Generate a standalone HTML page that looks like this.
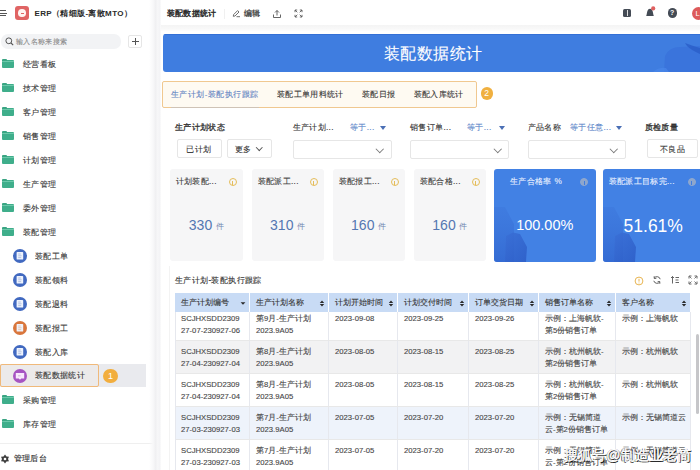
<!DOCTYPE html>
<html><head><meta charset="utf-8">
<style>
*{box-sizing:border-box;margin:0;padding:0}
html,body{width:700px;height:470px;overflow:hidden;background:#fff;font-family:"Liberation Sans",sans-serif;color:#333;font-size:8px;-webkit-text-stroke:0.1px currentColor;letter-spacing:0.35px}
.a{position:absolute}
.t{white-space:nowrap;line-height:1}
/* sidebar */
#sb{left:0;top:0;width:154.5px;height:470px;background:#fff}
#strip{left:149px;top:0;width:12px;height:470px;background:linear-gradient(to right,rgba(255,255,255,0) 0%,#f8f8f9 35%,#f0f0f2 55%,#f7f7f8 72%,#f3f3f5 92%,#fff 100%)}
.mi{position:absolute;left:0;width:146px;height:24px}
.mi .tx{position:absolute;left:23px;top:9px;font-size:8.25px;color:#383838;-webkit-text-stroke:0.12px currentColor;line-height:1;white-space:nowrap}
.fold{position:absolute;left:2.3px;top:8.2px;width:11.4px;height:7.5px;background:#3fae8b;border-radius:0 1px 1px 1px}
.fold:before{content:"";position:absolute;left:0;top:-1.2px;width:4.5px;height:1.6px;background:#3aa583;border-radius:1px 1px 0 0}
.fold:after{content:"";position:absolute;left:0;top:1.2px;width:11.4px;height:0.8px;background:#6cc8aa}
.sub .tx{left:35px}
.ci2{position:absolute;left:13px;top:5px}
.ci{position:absolute;left:13px;top:5px;width:14px;height:14px;border-radius:50%;background:#4770c9}
.ci:after{content:"";position:absolute;left:4.5px;top:3.5px;width:5px;height:7px;background:#e8effc;border-radius:0.5px}
/* main */
#hdr{left:160.5px;top:0;width:540px;height:27px;background:#fff;border-bottom:1px solid #f5f5f5}
.card{position:absolute;top:169px;height:92px;background:#f6f6f7;border-radius:3px}
.card .ct{position:absolute;left:6px;top:9px;font-size:8.25px;color:#3a3a3a;line-height:1;white-space:nowrap}
.card .info{position:absolute;top:9px;width:8px;height:8px;border:1px solid #e5bd5a;border-radius:50%;-webkit-text-stroke:0}
.card .info:after{content:"";position:absolute;left:2.5px;top:1.5px;width:1px;height:3.2px;background:#e5bd5a;border-top:0.6px solid #e5bd5a}
.card .num{position:absolute;left:0;right:0;top:49px;text-align:center;font-size:14px;color:#5477b2;letter-spacing:0;-webkit-text-stroke:0;line-height:1;white-space:nowrap}
.card .num small{font-size:8px;margin-left:3.5px;color:#6f86b0;position:relative;top:-1px}
.bcard{background:#4281e4}
.bcard .ct{color:#eaf1ff}
.bcard .num{color:#fff;font-size:14.5px;top:49px}
.bcard .info{border-color:#8fa8d0;background:#8ea6cc}
.bcard .info:after{background:#3f7de0;border-color:#3f7de0}
.flab{position:absolute;top:123.5px;font-size:8.25px;color:#333;line-height:1;white-space:nowrap}
.feq{position:absolute;top:123.5px;font-size:8.25px;color:#5b86c9;line-height:1;white-space:nowrap}
.tri{position:absolute;top:126px;width:0;height:0;border-left:3.5px solid transparent;border-right:3.5px solid transparent;border-top:4px solid #4a6fb5}
.sel{position:absolute;top:139.5px;height:19px;width:99px;border:1px solid #e6e6e6;border-radius:2px;background:#fff}
.sel:after{content:"";position:absolute;right:8px;top:5px;width:4.5px;height:4.5px;border-right:1px solid #777;border-bottom:1px solid #777;transform:rotate(45deg)}
.btn{position:absolute;top:139px;height:18.5px;border:1px solid #e6e6e6;border-radius:2px;background:#fff;font-size:8.25px;color:#333;line-height:19px;text-align:center;white-space:nowrap}
/* table */
#tbl{position:absolute;left:175px;top:293px;width:516px;height:180px}
#tbl:before{content:"";position:absolute;left:0;top:19px;width:1px;height:170px;background:#e6e8ee;z-index:2}
.th{position:absolute;top:0;height:19px;background:#c8dbf5;border-right:1px solid #fff}
.th span{position:absolute;left:6px;top:6px;font-size:8px;letter-spacing:0;color:#333;line-height:1;white-space:nowrap}
.th svg{position:absolute;right:3.5px;top:6.5px}

.row{position:absolute;left:0;width:516px;border-bottom:1px solid #e8e8e8}
.cell{position:absolute;top:0;bottom:0;border-right:1px solid #e6e8ee}
.cell p{position:absolute;left:6px;font-size:7.7px;letter-spacing:0;-webkit-text-stroke:0.12px currentColor;color:#474747;line-height:12px;white-space:nowrap}
</style></head><body>

<!-- SIDEBAR -->
<div id="sb" class="a">
  <!-- hamburger -->
  <div class="a" style="left:0;top:10px;width:6px;height:1px;background:#555"></div>
  <div class="a" style="left:0;top:12.5px;width:7px;height:1px;background:#555"></div>
  <div class="a" style="left:0;top:15px;width:6px;height:1px;background:#555"></div>
  <!-- logo -->
  <div class="a" style="left:15px;top:6px;width:14px;height:14px;background:#e06464;border-radius:3px">
    <div class="a" style="left:3.2px;top:3.2px;width:7.6px;height:7.6px;border-radius:50%;background:#fff4f2"></div>
    <div class="a" style="left:5.5px;top:6.5px;width:3px;height:1px;background:#e06464"></div>
  </div>
  <div class="a t" style="left:34.5px;top:9.5px;font-size:8px;font-weight:bold;color:#2a2a2a;-webkit-text-stroke:0">ERP（精细版-离散MTO）</div>
  <!-- search -->
  <div class="a" style="left:1px;top:33.5px;width:120px;height:15px;background:#f2f3f5;border-radius:7px"></div>
  <svg class="a" style="left:5px;top:37px" width="9" height="9" viewBox="0 0 9 9"><circle cx="3.8" cy="3.8" r="2.9" fill="none" stroke="#555" stroke-width="1"/><path d="M6 6 L8.2 8.2" stroke="#555" stroke-width="1.1"/></svg>
  <div class="a t" style="left:16px;top:37.5px;font-size:7.2px;color:#888">输入名称来搜索</div>
  <div class="a" style="left:128px;top:35px;width:14px;height:13px;border:1px solid #e6e6e6;border-radius:2px;background:#fff"></div>
  <div class="a" style="left:131.5px;top:41px;width:7px;height:1px;background:#555"></div>
  <div class="a" style="left:134.5px;top:38px;width:1px;height:7px;background:#555"></div>

  <div class="mi" style="top:52px"><div class="fold"></div><div class="tx">经营看板</div></div>
  <div class="mi" style="top:76px"><div class="fold"></div><div class="tx">技术管理</div></div>
  <div class="mi" style="top:100px"><div class="fold"></div><div class="tx">客户管理</div></div>
  <div class="mi" style="top:124px"><div class="fold"></div><div class="tx">销售管理</div></div>
  <div class="mi" style="top:148px"><div class="fold"></div><div class="tx">计划管理</div></div>
  <div class="mi" style="top:172px"><div class="fold"></div><div class="tx">生产管理</div></div>
  <div class="mi" style="top:196px"><div class="fold"></div><div class="tx">委外管理</div></div>
  <div class="mi" style="top:220px"><div class="fold"></div><div class="tx">装配管理</div></div>
  <div class="mi sub" style="top:244px"><svg class="ci2" width="14" height="14" viewBox="0 0 14 14"><circle cx="7" cy="7" r="7" fill="#4169c0"/><rect x="3.6" y="3" width="6.6" height="7.6" rx="0.7" fill="#eef3fd"/><path d="M5.2 5 H7.8 M5.2 6.8 H8.6 M5.2 8.6 H8.2" stroke="#9db0d8" stroke-width="0.7"/></svg><div class="tx">装配工单</div></div>
  <div class="mi sub" style="top:268px"><svg class="ci2" width="14" height="14" viewBox="0 0 14 14"><circle cx="7" cy="7" r="7" fill="#4169c0"/><rect x="3.6" y="3" width="6.6" height="7.6" rx="0.7" fill="#eef3fd"/><path d="M5.2 5 H7.8 M5.2 6.8 H8.6 M5.2 8.6 H8.2" stroke="#9db0d8" stroke-width="0.7"/></svg><div class="tx">装配领料</div></div>
  <div class="mi sub" style="top:292px"><svg class="ci2" width="14" height="14" viewBox="0 0 14 14"><circle cx="7" cy="7" r="7" fill="#4169c0"/><rect x="3.6" y="3" width="6.6" height="7.6" rx="0.7" fill="#eef3fd"/><path d="M5.2 5 H7.8 M5.2 6.8 H8.6 M5.2 8.6 H8.2" stroke="#9db0d8" stroke-width="0.7"/></svg><div class="tx">装配退料</div></div>
  <div class="mi sub" style="top:316px"><svg class="ci2" width="14" height="14" viewBox="0 0 14 14"><circle cx="7" cy="7" r="7" fill="#d9763c"/><rect x="3.6" y="3" width="6.6" height="7.6" rx="0.7" fill="#eef3fd"/><path d="M5.2 5 H7.8 M5.2 6.8 H8.6 M5.2 8.6 H8.2" stroke="#e0b89a" stroke-width="0.7"/></svg><div class="tx">装配报工</div></div>
  <div class="mi sub" style="top:340px"><svg class="ci2" width="14" height="14" viewBox="0 0 14 14"><circle cx="7" cy="7" r="7" fill="#4169c0"/><rect x="3.6" y="3" width="6.6" height="7.6" rx="0.7" fill="#eef3fd"/><path d="M5.2 5 H7.8 M5.2 6.8 H8.6 M5.2 8.6 H8.2" stroke="#9db0d8" stroke-width="0.7"/></svg><div class="tx">装配入库</div></div>
  <div class="mi sub" style="top:364px;background:#e9eaee;height:23px">
    <div class="a" style="left:0;top:0;width:99px;height:23px;border:1px solid #f0b97a;border-radius:2px;background:#eceaea"></div>
    <svg class="ci2" style="top:4.5px" width="14" height="14" viewBox="0 0 14 14"><circle cx="7" cy="7" r="7" fill="#a654c2"/><path d="M2.8 4 H11.2 V9.4 H8.2 L7 10.8 L5.8 9.4 H2.8 Z" fill="#f8e8fc"/><path d="M5 6.8 H7.5" stroke="#c79ad6" stroke-width="0.7"/></svg>
    <div class="tx" style="top:7.5px">装配数据统计</div>
    <div class="a" style="left:103px;top:4.5px;width:14.5px;height:14.5px;border-radius:50%;background:#f2ae3e"></div>
    <div class="a t" style="left:108px;top:7.5px;font-size:9px;color:#fff;-webkit-text-stroke:0">1</div>
  </div>
  <div class="mi" style="top:388px"><div class="fold"></div><div class="tx">采购管理</div></div>
  <div class="mi" style="top:412px"><div class="fold"></div><div class="tx">库存管理</div></div>
  <div class="a" style="left:0;top:443px;width:155px;height:1px;background:#efefef"></div>
  <svg class="a" style="left:-0.4px;top:453.5px" width="10" height="10" viewBox="0 0 10 10"><polygon points="5.00,0.40 6.50,2.40 8.98,2.70 8.00,5.00 8.98,7.30 6.50,7.60 5.00,9.60 3.50,7.60 1.02,7.30 2.00,5.00 1.02,2.70 3.50,2.40" fill="#3d3d3d"/><circle cx="5" cy="5" r="1.3" fill="#fff"/></svg>
  <div class="a t" style="left:13.5px;top:454.5px;font-size:8px;color:#333;-webkit-text-stroke:0.15px currentColor">管理后台</div>
</div>
<div id="strip" class="a"></div>

<!-- HEADER -->
<div class="a" style="left:160.5px;top:24.5px;width:540px;height:6px;background:linear-gradient(#f4f4f4,#f8f8f8 60%,#fdfdfd)"></div>
<div class="a t" style="left:166.5px;top:9px;font-size:8.3px;color:#2a2a2a;-webkit-text-stroke:0.4px currentColor">装配数据统计</div>
<div class="a" style="left:223.5px;top:9px;width:1px;height:10px;background:#f0f0f0"></div>
<svg class="a" style="left:231.5px;top:9px" width="9" height="9" viewBox="0 0 9 9"><path d="M1.3 7.3 L1.6 5.6 L5.6 1.6 L7 3 L3 7 Z" fill="none" stroke="#555" stroke-width="0.85" stroke-linejoin="round"/><path d="M4.5 7.7 H8" stroke="#555" stroke-width="0.85"/></svg>
<div class="a t" style="left:243.5px;top:9px;font-size:8.3px;color:#3a3a3a;-webkit-text-stroke:0.25px currentColor">编辑</div>
<svg class="a" style="left:271.5px;top:9px" width="10" height="10" viewBox="0 0 10 10"><path d="M5 6.5 V1.5 M3 3.5 L5 1.5 L7 3.5" fill="none" stroke="#555" stroke-width="0.9"/><path d="M1.5 5.5 V8.5 H8.5 V5.5" fill="none" stroke="#555" stroke-width="0.9"/></svg>
<svg class="a" style="left:293.8px;top:9px" width="9" height="9" viewBox="0 0 9 9"><path d="M1 3.2 V1 H3.2 M1 1 L3.3 3.3 M5.8 1 H8 V3.2 M8 1 L5.7 3.3 M8 5.8 V8 H5.8 M8 8 L5.7 5.7 M3.2 8 H1 V5.8 M1 8 L3.3 5.7" fill="none" stroke="#555" stroke-width="0.85"/></svg>
<div class="a" style="left:623px;top:8.5px;width:8px;height:8.5px;background:#444b55;border-radius:1.5px"></div>
<div class="a" style="left:627px;top:10px;width:0.8px;height:5.5px;background:#ddd"></div>
<svg class="a" style="left:645px;top:6px" width="11" height="12" viewBox="0 0 11 12"><path d="M1.2 10 C2 8.5 1.8 5 3.2 3.6 C4.3 2.6 5.7 2.6 6.8 3.6 C8.2 5 8 8.5 8.8 10 Z" fill="#444b55"/><circle cx="8.2" cy="2.4" r="2.1" fill="#e06060"/></svg>
<div class="a" style="left:667.5px;top:8.2px;width:9.5px;height:9.5px;background:#444b55;border-radius:50%;color:#fff;font-size:7px;text-align:center;line-height:9.5px;font-weight:bold;-webkit-text-stroke:0;letter-spacing:0">?</div>
<div class="a" style="left:692px;top:6.5px;width:13px;height:13px;background:#dd5a5a;border-radius:50%;color:#fff;font-size:7.5px;line-height:13px;padding-left:3.5px;-webkit-text-stroke:0">L</div>

<!-- BANNER -->
<div class="a" style="left:163px;top:34px;width:537px;height:38px;background:#3f7de0;border-radius:3px 0 0 3px;overflow:hidden">
  <svg class="a" style="left:0;top:0" width="537" height="38" viewBox="0 0 537 38"><rect x="0" y="0" width="537" height="1" fill="#3470d6"/><path d="M501 38 L502 22 Q506 13 517 13 L537 12 L537 38 Z" fill="#3a74dc"/><path d="M522 9 Q530 12 537 14 L537 20 Q528 16 524 12 Z" fill="#2a5ec8" opacity="0.8"/><path d="M490 38 Q496 33 503 34 L506 38 Z" fill="#4a88ea" opacity="0.7"/></svg>
</div>
<div class="a t" style="left:384px;top:46px;font-size:16px;letter-spacing:0.45px;color:#fff">装配数据统计</div>

<!-- TABS -->
<div class="a" style="left:162px;top:81px;width:314.5px;height:27px;border:1px solid #f0c890;background:#fefaf2;border-radius:2px"></div>
<div class="a t" style="left:171px;top:91px;font-size:8px;letter-spacing:0.45px;color:#5f83c2">生产计划-装配执行跟踪</div>
<div class="a" style="left:171px;top:106.5px;width:88px;height:1px;background:#cfc3b6"></div>
<div class="a t" style="left:277px;top:91px;font-size:8px;color:#333">装配工单用料统计</div>
<div class="a t" style="left:362px;top:91px;font-size:8px;color:#333">装配日报</div>
<div class="a t" style="left:413.5px;top:91px;font-size:8px;color:#333">装配入库统计</div>
<div class="a" style="left:480.5px;top:87px;width:12.8px;height:12.8px;border-radius:50%;background:#f0b040"></div>
<div class="a t" style="left:484.2px;top:89.3px;font-size:8.5px;color:#fff;letter-spacing:0;-webkit-text-stroke:0">2</div>

<!-- FILTERS -->
<div class="flab" style="left:175px;-webkit-text-stroke:0.3px currentColor">生产计划状态</div>
<div class="btn" style="left:176.5px;width:45px">已计划</div>
<div class="btn" style="left:227px;width:44.5px;text-align:left;padding-left:7px">更多<span style="display:inline-block;width:4.5px;height:4.5px;border-right:1px solid #555;border-bottom:1px solid #555;transform:rotate(45deg);margin:0 0 2.5px 5px"></span></div>

<div class="flab" style="left:292.5px">生产计划...</div>
<div class="feq" style="left:350px">等于...</div>
<div class="tri" style="left:380px"></div>
<div class="sel" style="left:292.5px"></div>

<div class="flab" style="left:410px">销售订单...</div>
<div class="feq" style="left:467px">等于...</div>
<div class="tri" style="left:498.5px"></div>
<div class="sel" style="left:410px"></div>

<div class="flab" style="left:527.5px">产品名称</div>
<div class="feq" style="left:570px">等于任意...</div>
<div class="tri" style="left:615.5px"></div>
<div class="sel" style="left:527.5px;width:98px"></div>

<div class="flab" style="left:644.5px;-webkit-text-stroke:0.3px currentColor">质检质量</div>
<div class="btn" style="left:647px;width:51px">不良品</div>

<!-- CARDS -->
<div class="card" style="left:169.5px;width:73.5px"><div class="ct">计划装配...</div><div class="info" style="left:59px"></div><div class="num">330<small>件</small></div></div>
<div class="card" style="left:251.5px;width:72px"><div class="ct">装配派工...</div><div class="info" style="left:58px"></div><div class="num">310<small>件</small></div></div>
<div class="card" style="left:332.5px;width:72px"><div class="ct">装配报工...</div><div class="info" style="left:58px"></div><div class="num">160<small>件</small></div></div>
<div class="card" style="left:413.5px;width:72.5px"><div class="ct">装配合格...</div><div class="info" style="left:58px"></div><div class="num">160<small>件</small></div></div>
<div class="card bcard" style="left:494px;width:101.5px;height:92.5px;overflow:hidden"><svg class="a" style="left:0;top:0" width="40" height="93" viewBox="0 0 40 93"><defs><linearGradient id="gA" x1="0" y1="0" x2="0" y2="1"><stop offset="0" stop-color="#3a72d8" stop-opacity="0.35"/><stop offset="1" stop-color="#2f62cc" stop-opacity="0.7"/></linearGradient><linearGradient id="gB" x1="0" y1="0" x2="1" y2="1"><stop offset="0" stop-color="#3a6fd6"/><stop offset="1" stop-color="#2c5cc6"/></linearGradient></defs><path d="M0 38 L11 38 L20 55 L20 93 L0 93 Z" fill="url(#gA)"/><path d="M12 67 L19 63.5 L26 65 L33 78 L32 93 L11 93 Z" fill="url(#gB)" opacity="0.85"/></svg><div class="ct" style="left:16px">生产合格率 %</div><div class="info" style="left:86px"></div><div class="num">100.00%</div></div>
<div class="card bcard" style="left:602.5px;width:110px;height:92.5px;overflow:hidden"><svg class="a" style="left:0;top:0" width="40" height="93" viewBox="0 0 40 93"><defs><linearGradient id="gA2" x1="0" y1="0" x2="0" y2="1"><stop offset="0" stop-color="#3a72d8" stop-opacity="0.35"/><stop offset="1" stop-color="#2f62cc" stop-opacity="0.7"/></linearGradient><linearGradient id="gB2" x1="0" y1="0" x2="1" y2="1"><stop offset="0" stop-color="#3a6fd6"/><stop offset="1" stop-color="#2c5cc6"/></linearGradient></defs><path d="M0 38 L11 38 L20 55 L20 93 L0 93 Z" fill="url(#gA2)"/><path d="M12 67 L19 63.5 L26 65 L33 78 L32 93 L11 93 Z" fill="url(#gB2)" opacity="0.85"/></svg><div class="ct">装配派工目标完...</div><div class="info" style="left:85px"></div><div class="num" style="right:0;width:101.5px;font-size:17.5px;top:48.5px">51.61%</div></div>

<!-- TABLE PANEL -->
<div class="a" style="left:169px;top:266px;width:531px;height:204px;background:#fff;border-left:1px solid #f3f3f3"></div>
<div class="a t" style="left:175px;top:276.5px;font-size:8.25px;color:#333;-webkit-text-stroke:0.12px currentColor">生产计划-装配执行跟踪</div>
<svg class="a" style="left:634px;top:275.5px" width="10" height="10" viewBox="0 0 10 10"><circle cx="5" cy="5" r="3.9" fill="none" stroke="#e8b552" stroke-width="1"/><path d="M5 2.8 V5.6 M5 6.6 V7.4" stroke="#e8b552" stroke-width="1"/></svg>
<svg class="a" style="left:651.5px;top:275px" width="10" height="10" viewBox="0 0 10 10"><path d="M8.2 4.2 A3.3 3.3 0 0 0 2.2 3.2 M1.8 5.8 A3.3 3.3 0 0 0 7.8 6.8" fill="none" stroke="#555" stroke-width="0.95"/><path d="M2.2 1.2 V3.4 H4.3 M7.8 8.8 V6.6 H5.7" fill="none" stroke="#555" stroke-width="0.9"/></svg>
<svg class="a" style="left:670px;top:275px" width="10" height="10" viewBox="0 0 10 10"><path d="M2.5 8.5 V1.5 M1 3 L2.5 1.5 L4 3" fill="none" stroke="#555" stroke-width="0.9"/><path d="M5.5 2.5 H9 M5.5 5 H8.5 M5.5 7.5 H9" stroke="#555" stroke-width="0.9"/></svg>
<svg class="a" style="left:688px;top:275px" width="10" height="10" viewBox="0 0 10 10"><path d="M1 3.5 V1 H3.5 M6.5 1 H9 V3.5 M9 6.5 V9 H6.5 M3.5 9 H1 V6.5" fill="none" stroke="#555" stroke-width="0.9"/><path d="M1.5 1.5 L3.5 3.5 M8.5 1.5 L6.5 3.5 M8.5 8.5 L6.5 6.5 M1.5 8.5 L3.5 6.5" stroke="#555" stroke-width="0.8"/></svg>

<div id="tbl">
  <div class="th" style="left:0;width:75px"><span>生产计划编号</span><svg width="6" height="7" viewBox="0 0 6 7"><path d="M0.6 2.2 L3 4.8 L5.4 2.2 Z" fill="#2a2a2a"/></svg></div>
  <div class="th" style="left:75px;width:79px"><span>生产计划名称</span><svg width="6" height="7" viewBox="0 0 6 7"><path d="M0.8 3 L3 0.6 L5.2 3 Z M0.8 4 L3 6.4 L5.2 4 Z" fill="#2a2a2a"/></svg></div>
  <div class="th" style="left:154px;width:69px"><span>计划开始时间</span><svg width="6" height="7" viewBox="0 0 6 7"><path d="M0.8 3 L3 0.6 L5.2 3 Z M0.8 4 L3 6.4 L5.2 4 Z" fill="#2a2a2a"/></svg></div>
  <div class="th" style="left:223px;width:71px"><span>计划交付时间</span><svg width="6" height="7" viewBox="0 0 6 7"><path d="M0.8 3 L3 0.6 L5.2 3 Z M0.8 4 L3 6.4 L5.2 4 Z" fill="#2a2a2a"/></svg></div>
  <div class="th" style="left:294px;width:70px"><span>订单交货日期</span><svg width="6" height="7" viewBox="0 0 6 7"><path d="M0.8 3 L3 0.6 L5.2 3 Z M0.8 4 L3 6.4 L5.2 4 Z" fill="#2a2a2a"/></svg></div>
  <div class="th" style="left:364px;width:77px"><span>销售订单名称</span><svg width="6" height="7" viewBox="0 0 6 7"><path d="M0.8 3 L3 0.6 L5.2 3 Z M0.8 4 L3 6.4 L5.2 4 Z" fill="#2a2a2a"/></svg></div>
  <div class="th" style="left:441px;width:75px"><span>客户名称</span><svg width="6" height="7" viewBox="0 0 6 7"><path d="M0.8 3 L3 0.6 L5.2 3 Z M0.8 4 L3 6.4 L5.2 4 Z" fill="#2a2a2a"/></svg></div>
<!--ROWS-->
<div class="row" style="top:19px;height:29px;background:#fff">
<div class="cell" style="left:0px;width:75px"><p style="top:0.5999999999999996px">SCJHXSDD2309<br>27-07-230927-06</p></div>
<div class="cell" style="left:75px;width:79px"><p style="top:0.5999999999999996px">第9月-生产计划<br>2023.9A05</p></div>
<div class="cell" style="left:154px;width:69px"><p style="top:0.5999999999999996px">2023-09-08</p></div>
<div class="cell" style="left:223px;width:71px"><p style="top:0.5999999999999996px">2023-09-25</p></div>
<div class="cell" style="left:294px;width:70px"><p style="top:0.5999999999999996px">2023-09-26</p></div>
<div class="cell" style="left:364px;width:77px"><p style="top:0.5999999999999996px">示例：上海帆软-<br>第5份销售订单</p></div>
<div class="cell" style="left:441px;width:75px"><p style="top:0.5999999999999996px">示例：上海帆软</p></div>
</div>
<div class="row" style="top:48px;height:33px;background:#f2f2f3">
<div class="cell" style="left:0px;width:75px"><p style="top:4.5px">SCJHXSDD2309<br>27-04-230927-04</p></div>
<div class="cell" style="left:75px;width:79px"><p style="top:4.5px">第8月-生产计划<br>2023.9A05</p></div>
<div class="cell" style="left:154px;width:69px"><p style="top:4.5px">2023-08-05</p></div>
<div class="cell" style="left:223px;width:71px"><p style="top:4.5px">2023-08-15</p></div>
<div class="cell" style="left:294px;width:70px"><p style="top:4.5px">2023-08-25</p></div>
<div class="cell" style="left:364px;width:77px"><p style="top:4.5px">示例：杭州帆软-<br>第2份销售订单</p></div>
<div class="cell" style="left:441px;width:75px"><p style="top:4.5px">示例：杭州帆软</p></div>
</div>
<div class="row" style="top:81px;height:33px;background:#fff">
<div class="cell" style="left:0px;width:75px"><p style="top:4.5px">SCJHXSDD2309<br>27-04-230927-04</p></div>
<div class="cell" style="left:75px;width:79px"><p style="top:4.5px">第8月-生产计划<br>2023.9A05</p></div>
<div class="cell" style="left:154px;width:69px"><p style="top:4.5px">2023-08-05</p></div>
<div class="cell" style="left:223px;width:71px"><p style="top:4.5px">2023-08-15</p></div>
<div class="cell" style="left:294px;width:70px"><p style="top:4.5px">2023-08-25</p></div>
<div class="cell" style="left:364px;width:77px"><p style="top:4.5px">示例：杭州帆软-<br>第2份销售订单</p></div>
<div class="cell" style="left:441px;width:75px"><p style="top:4.5px">示例：杭州帆软</p></div>
</div>
<div class="row" style="top:114px;height:33px;background:#eef3fb">
<div class="cell" style="left:0px;width:75px"><p style="top:4.5px">SCJHXSDD2309<br>27-03-230927-03</p></div>
<div class="cell" style="left:75px;width:79px"><p style="top:4.5px">第7月-生产计划<br>2023.9A05</p></div>
<div class="cell" style="left:154px;width:69px"><p style="top:4.5px">2023-07-05</p></div>
<div class="cell" style="left:223px;width:71px"><p style="top:4.5px">2023-07-20</p></div>
<div class="cell" style="left:294px;width:70px"><p style="top:4.5px">2023-07-20</p></div>
<div class="cell" style="left:364px;width:77px"><p style="top:4.5px">示例：无锡简道<br>云-第2份销售订单</p></div>
<div class="cell" style="left:441px;width:75px"><p style="top:4.5px">示例：无锡简道云</p></div>
</div>
<div class="row" style="top:147px;height:33px;background:#fff">
<div class="cell" style="left:0px;width:75px"><p style="top:4.5px">SCJHXSDD2309<br>27-03-230927-03</p></div>
<div class="cell" style="left:75px;width:79px"><p style="top:4.5px">第7月-生产计划<br>2023.9A05</p></div>
<div class="cell" style="left:154px;width:69px"><p style="top:4.5px">2023-07-05</p></div>
<div class="cell" style="left:223px;width:71px"><p style="top:4.5px">2023-07-20</p></div>
<div class="cell" style="left:294px;width:70px"><p style="top:4.5px">2023-07-20</p></div>
<div class="cell" style="left:364px;width:77px"><p style="top:4.5px">示例：无锡简道<br>云-第2份销售订单</p></div>
<div class="cell" style="left:441px;width:75px"><p style="top:4.5px">示例：无锡简道云</p></div>
</div>
<!--/ROWS-->
</div>
<div class="a" style="left:695.5px;top:334px;width:3.5px;height:80px;background:#c6c6c9;border-radius:2px"></div>
<div class="a t" style="left:564px;top:448px;font-size:14px;letter-spacing:0.1px;color:#fff;-webkit-text-stroke:0.5px #fff;text-shadow:0.8px 0.8px 0.5px rgba(0,0,0,.9),-0.5px -0.5px 0.5px rgba(0,0,0,.6),0.8px -0.5px 0.5px rgba(0,0,0,.5),-0.5px 0.8px 0.5px rgba(0,0,0,.5)">搜狐号@制造业老简</div>
</body></html>
